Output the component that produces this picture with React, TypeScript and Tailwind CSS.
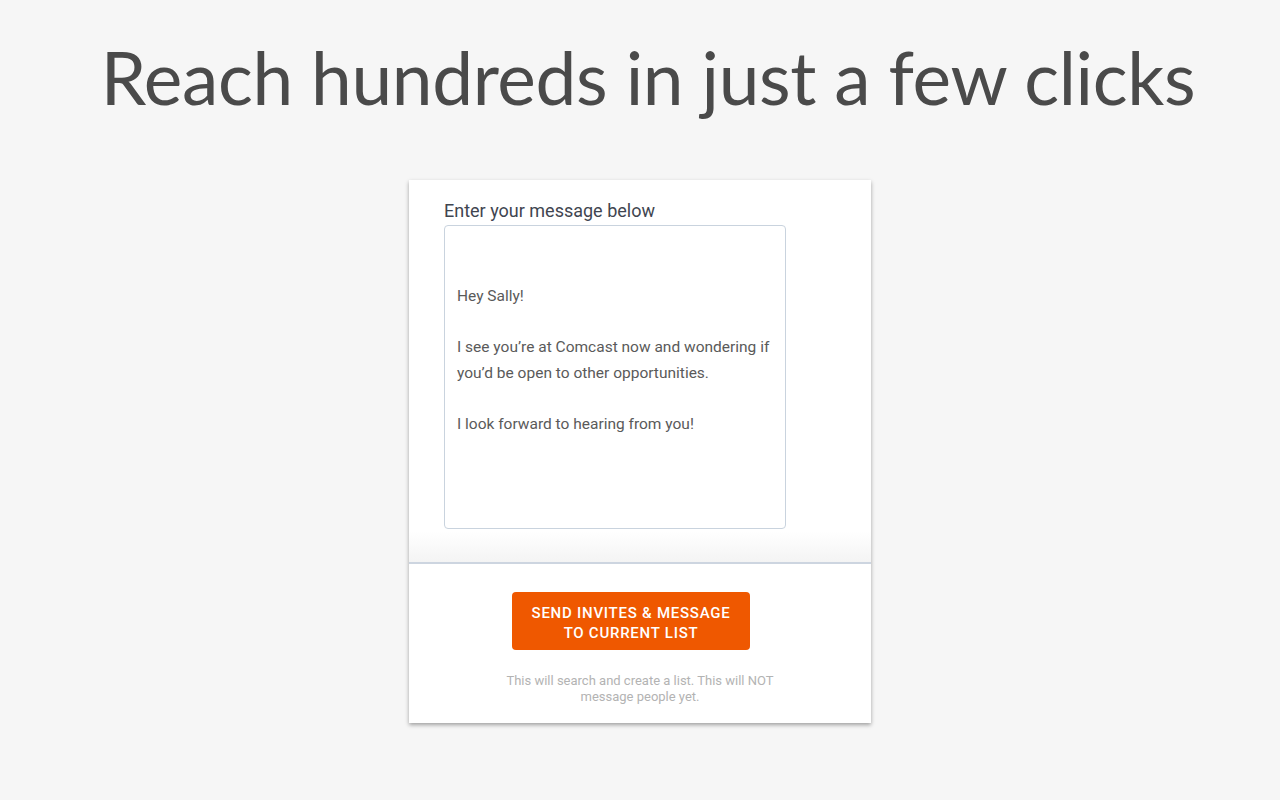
export default function App() {
  const body = { fontFamily: "Roboto, 'Liberation Sans', sans-serif" };
  return (
    <div className="w-[1280px] h-[800px] bg-[#f6f6f6] flex flex-col items-center overflow-hidden">
      <h1
        className="mt-[32px] text-[73px] leading-[90px] text-[#4a4a4a] tracking-[-0.005em] pl-[16px]"
        style={{ fontFamily: "Lato, 'Noto Sans', sans-serif" }}
      >
        Reach hundreds in just a few clicks
      </h1>
      <div
        className="mt-[58px] w-[462px] bg-white shadow-[0_2px_4px_rgba(0,0,0,0.35)] flex flex-col"
        style={body}
      >
        <div className="pt-[21px] pl-[35px] pb-[33px] bg-gradient-to-b from-white from-92% to-[#f4f4f4]">
          <div className="text-[18px] leading-[20px] text-[#3f4550]">Enter your message below</div>
          <div className="mt-[4px] w-[342px] h-[304px] border border-[#c9d3de] rounded-[4px] pl-[12px] pt-[7px] text-[15.5px] leading-[25.6px] text-[#5a5a5a]">
            <div>&nbsp;</div>
            <div>&nbsp;</div>
            <div>Hey Sally!</div>
            <div>&nbsp;</div>
            <div>I see you’re at Comcast now and wondering if</div>
            <div>you’d be open to other opportunities.</div>
            <div>&nbsp;</div>
            <div>I look forward to hearing from you!</div>
          </div>
        </div>
        <div className="h-[2px] bg-[#cdd5e0]" />
        <div className="flex flex-col items-center pt-[28px] pb-[18px]">
          <button className="mr-[18px] w-[238px] h-[58px] bg-[#ef5800] rounded-[4px] text-white text-[15px] leading-[20px] font-medium tracking-[0.05em] uppercase pt-[3px]">
            Send invites &amp; message
            <br />
            to current list
          </button>
          <div className="mt-[23px] text-[13px] leading-[16px] text-[#b3b3b3] text-center">
            This will search and create a list. This will NOT
            <br />
            message people yet.
          </div>
        </div>
      </div>
    </div>
  );
}
